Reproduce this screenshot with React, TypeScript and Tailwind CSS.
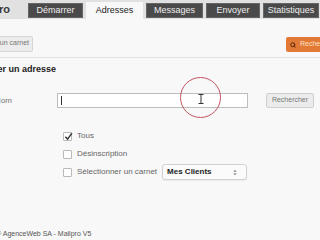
import { Search } from 'lucide-react';

const tabs = [
  { label: 'Démarrer', w: 'w-[55px]', active: false },
  { label: 'Adresses', w: 'w-[57px]', active: true },
  { label: 'Messages', w: 'w-[57px]', active: false },
  { label: 'Envoyer', w: 'w-[54px]', active: false },
  { label: 'Statistiques', w: 'w-[56px]', active: false },
];

function Checkbox({ checked }: { checked?: boolean }) {
  return (
    <span className="relative flex h-[9px] w-[9px] shrink-0 items-center justify-center rounded-[1px] border border-[#b9b9b9] bg-white">
      {checked && (
        <svg viewBox="0 0 10 10" className="absolute -top-[1px] left-[0px] h-[9px] w-[9px]">
          <path d="M1.5 5.2 L4 8 L8.8 1.2" fill="none" stroke="#333" strokeWidth="1.6" />
        </svg>
      )}
    </span>
  );
}

export default function App() {
  return (
    <div className="relative h-[240px] w-[320px] overflow-hidden bg-[#f8f8f8] font-['Liberation_Sans',Arial,sans-serif]">
      {/* header */}
      <div className="flex h-[19px] items-end bg-[#e1e1e1]">
        <div className="flex h-full w-[28px] items-center justify-end overflow-hidden pr-[18px]">
          <span className="whitespace-nowrap text-[11px] font-bold leading-none text-[#3a3a3a]">Mailpro</span>
        </div>
        <div className="flex items-end gap-[3px]">
          {tabs.map((t) =>
            t.active ? (
              <div
                key={t.label}
                className={`${t.w} flex h-[17px] items-center justify-center bg-[#f8f8f8] text-[9px] text-[#222]`}
              >
                {t.label}
              </div>
            ) : (
              <div
                key={t.label}
                className={`${t.w} mb-[1px] flex h-[15px] items-center justify-center border border-[#666] bg-[#4a4a4a] text-[9px] text-[#eee]`}
              >
                {t.label}
              </div>
            ),
          )}
        </div>
      </div>

      {/* toolbar */}
      <div className="flex items-center justify-between pt-[16px]">
        <div className="flex h-[16px] w-[33px] items-center justify-end overflow-hidden rounded-r-[2px] border border-l-0 border-[#d6d6d6] bg-[#ececec] pr-[3px]">
          <span className="whitespace-nowrap text-[7px] text-[#777]">Créer un carnet</span>
        </div>
        <div className="mt-[2px] flex h-[15px] w-[34px] items-center gap-[4px] overflow-hidden rounded-l-[2px] bg-[#e27a36] pl-[4px]">
          <Search className="h-[6px] w-[6px] shrink-0 text-[#5a2a10]" strokeWidth={4} />
          <span className="whitespace-nowrap text-[7px] text-[#fde0c8]">Rechercher</span>
        </div>
      </div>
      <div className="mt-[5px] h-px bg-[#e2e2e2]" />

      {/* heading */}
      <div className="mt-[6px] flex h-[12px] w-[56px] items-center justify-end overflow-hidden">
        <span className="whitespace-nowrap text-[9px] font-bold text-[#222]">Rechercher un adresse</span>
      </div>

      {/* name row */}
      <div className="mt-[17px] flex items-center">
        <div className="flex w-[57px] items-center">
          <div className="flex w-[12px] justify-end overflow-hidden">
            <span className="whitespace-nowrap text-[8px] text-[#777]">Nom</span>
          </div>
        </div>
        <div className="flex h-[15px] w-[191px] items-center border border-[#bdbdbd] bg-white pl-[3px]">
          <span className="h-[9px] w-px bg-[#333]" />
        </div>
        <div className="ml-[18px] flex h-[15px] w-[48px] items-center justify-center rounded-[2px] border border-[#cfcfcf] bg-[#ececec] text-[7px] text-[#777]">
          Rechercher
        </div>
      </div>

      {/* checkboxes */}
      <div className="ml-[63px] mt-[23px] flex flex-col">
        <div className="flex h-[10px] items-center gap-[5px]">
          <Checkbox checked />
          <span className="text-[8px] text-[#666]">Tous</span>
        </div>
        <div className="mt-[8px] flex h-[10px] items-center gap-[5px]">
          <Checkbox />
          <span className="text-[8px] text-[#666]">Désinscription</span>
        </div>
        <div className="mt-[5px] flex items-center">
          <div className="flex items-center gap-[5px]">
            <Checkbox />
            <span className="whitespace-nowrap text-[8px] text-[#666]">Sélectionner un carnet</span>
          </div>
          <div className="ml-[5px] flex h-[16px] w-[85px] items-center justify-between rounded-[3px] border border-[#d2d2d2] bg-[#fbfbfb] pl-[4px] pr-[9px] shadow-[0_1px_1px_rgba(0,0,0,0.06)]">
            <span className="text-[8px] font-bold text-[#222]">Mes Clients</span>
            <svg viewBox="0 0 6 10" className="h-[7px] w-[4px]">
              <path d="M0.5 4 L3 1 L5.5 4 Z M0.5 6 L3 9 L5.5 6 Z" fill="#888" />
            </svg>
          </div>
        </div>
      </div>

      {/* footer */}
      <div className="mt-[49px] flex items-center">
        <span className="-ml-[4px] whitespace-nowrap text-[7px] text-[#555]">© AgenceWeb SA - Mailpro V5</span>
      </div>

      {/* cursor highlight */}
      <div className="pointer-events-none absolute left-[180px] top-[77px] h-[41px] w-[41px] rounded-full border-[1.5px] border-[#c2545e]" />
      <svg viewBox="0 0 6 10" className="pointer-events-none absolute left-[198px] top-[94px] h-[10px] w-[6px]">
        <path d="M0.5 0.5 H5.5 M3 0.5 V9.5 M0.5 9.5 H5.5" fill="none" stroke="#333" strokeWidth="1" />
      </svg>
    </div>
  );
}
